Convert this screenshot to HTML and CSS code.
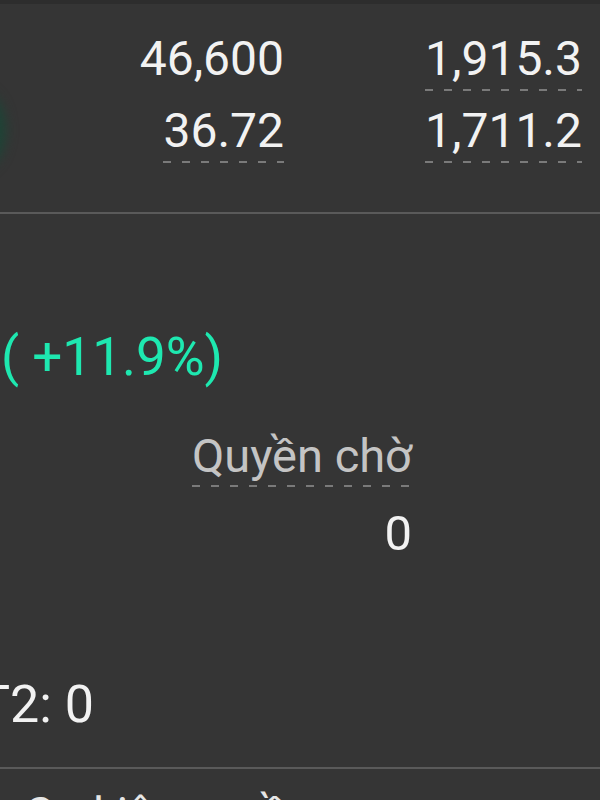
FILE: index.html
```html
<!DOCTYPE html>
<html lang="vi">
<head>
  <meta charset="UTF-8">
  <title>Danh mục</title>
  <link rel="stylesheet" href="styles.css">
</head>
<body>

  <div class="topbar"></div>

  <!-- QUOTES -->
  <section class="quotes">
    <span class="glow"></span>
    <div class="cell">46,600</div>
    <div class="cell dotted">1,915.3</div>
    <div class="cell dotted">36.72</div>
    <div class="cell dotted">1,711.2</div>
  </section>

  <hr class="divider">

  <!-- SUMMARY -->
  <section class="summary">
    <div class="change">( +11.9%)</div>

    <div class="rights">
      <span class="label dotted">Quyền chờ</span>
      <div class="value">0</div>
    </div>

    <div class="settle">T2: 0</div>
  </section>

  <hr class="divider">

  <div class="next">Tra cứu Sự kiện quyền</div>

</body>
</html>
```

FILE: styles.css
```css
body {
  background: #353535;
  font-family: Roboto, "Noto Sans", Arial, sans-serif;
  margin: 0;
  color: #f2f2f2;
  width: 600px;
  height: 800px;
  overflow: hidden;
}

.topbar {
  height: 4px;
  background: #2d2d2d;
}

.quotes {
  position: relative;
  display: grid;
  grid-template-columns: 284px 1fr;
  justify-items: end;
  align-content: start;
  row-gap: 12px;
  padding: 27px 18px 0 0;
  height: 208px;
  box-sizing: border-box;
}

.glow {
  position: absolute;
  left: -46px;
  top: 86px;
  width: 52px;
  height: 80px;
  border-radius: 50%;
  background: #1d4436;
  filter: blur(6px);
}

.cell {
  font-size: 48px;
  line-height: 56px;
  padding-bottom: 4px;
}

.dotted {
  background: repeating-linear-gradient(to right, #7a7a7a 0 8px, transparent 8px 19px) left bottom / 100% 2px no-repeat;
}

.divider {
  border: none;
  height: 2px;
  margin: 0;
  background: #5a5a5a;
}

.summary {
  padding-top: 112px;
}

.change {
  color: #1ee8b0;
  font-size: 53px;
  line-height: 62px;
  padding-left: 1px;
}

.rights {
  width: 412px;
  text-align: right;
  margin-top: 41px;
}

.label {
  display: inline-block;
  font-size: 47px;
  line-height: 54px;
  color: #c4c4c4;
  padding-bottom: 4px;
}

.value {
  font-size: 49px;
  line-height: 56px;
  margin-top: 19px;
}

.settle {
  font-size: 52px;
  line-height: 60px;
  margin: 113px 0 32px -21px;
}

.next {
  font-size: 46px;
  line-height: 54px;
  margin: 18px 0 0 -140px;
  white-space: nowrap;
  color: #e6e6e6;
}
```
